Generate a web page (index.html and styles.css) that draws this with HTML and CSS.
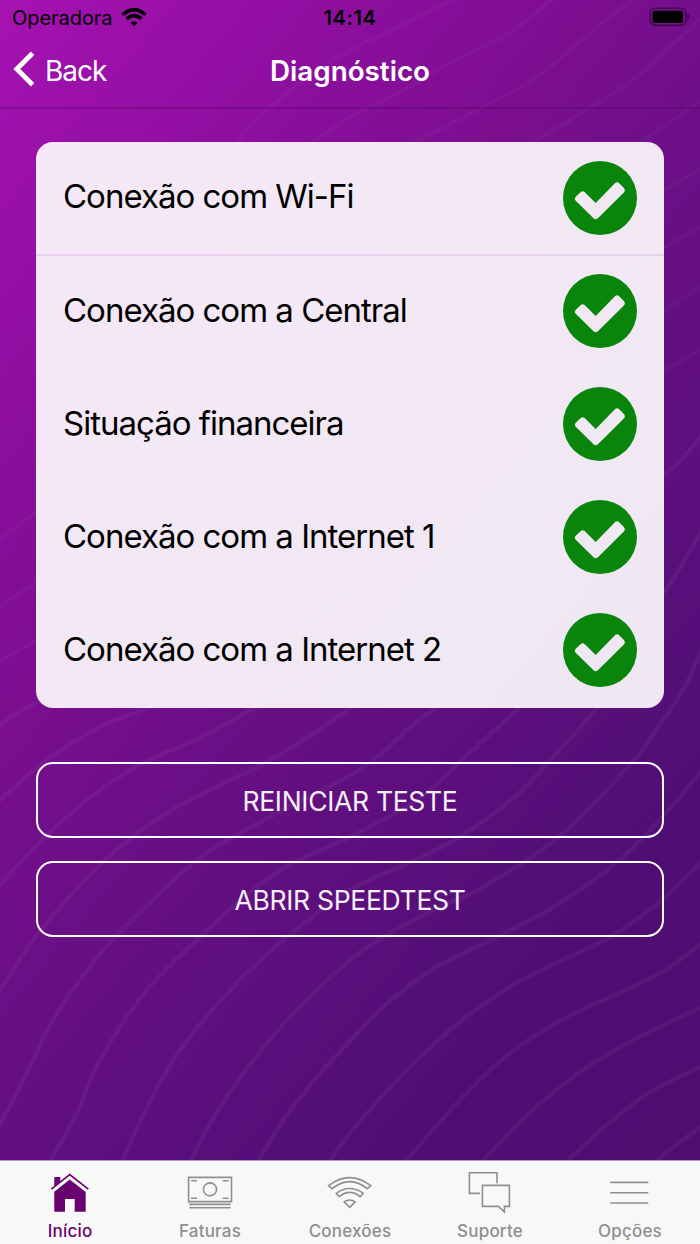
FILE: index.html
```html
<!DOCTYPE html>
<html lang="pt-BR">
<head>
<meta charset="utf-8">
<title>Diagnóstico</title>
<link rel="stylesheet" href="styles.css">
</head>
<body>
<svg class="defs" width="0" height="0" aria-hidden="true">
  <symbol id="check" viewBox="0 0 74 74">
    <path fill-rule="evenodd" d="M37 0a37 37 0 1 0 0 74a37 37 0 1 0 0-74Z M32.700 42L51.900 22.300Q54 20.300 56.200 22.200L60.900 26.900Q62.800 29.300 60.900 31.500L34.900 57.300Q32.700 59.300 30.500 57.300L12.700 39.700Q10.900 37.700 12.700 35.700L17.500 31.200Q19.700 29.300 21.900 31.200Z"/>
  </symbol>
</svg>
<div class="screen">
  <svg class="waves" viewBox="0 0 700 1160" aria-hidden="true"></svg>

  <div class="statusbar">
    <div class="carrier">
      <span class="carrier-name">Operadora</span>
      <svg class="wifi" viewBox="0 0 26 19">
        <path d="M13 18.300L9.500 14.900Q13 11.800 16.500 14.900Z"/>
        <path class="arc" d="M1.500 6.800Q13-3.800 24.500 6.800M5.600 10.900Q13 4.300 20.400 10.900"/>
      </svg>
    </div>
    <div class="clock">14:14</div>
    <svg class="battery" viewBox="0 0 42 20">
      <rect class="shell" x="1.200" y="1.200" width="35.600" height="17.200" rx="4.800"/>
      <rect x="3.500" y="3.700" width="30.500" height="12.300" rx="2.200"/>
      <path class="nub" d="M38.400 6.800Q40.800 7.800 40.800 10Q40.800 12.200 38.400 13.200Z"/>
    </svg>
  </div>

  <header class="navbar">
    <div class="back">
      <svg class="chevron" viewBox="0 0 24 38"><path d="M20.600 3.200L4.800 19L20.600 34.800"/></svg>
      <span class="back-label">Back</span>
    </div>
    <h1 class="title">Diagnóstico</h1>
  </header>

  <main class="content">
    <ul class="card">
      <li class="row first"><span>Conexão com Wi-Fi</span><svg class="check"><use href="#check"/></svg></li>
      <li class="row"><span>Conexão com a Central</span><svg class="check"><use href="#check"/></svg></li>
      <li class="row"><span>Situação financeira</span><svg class="check"><use href="#check"/></svg></li>
      <li class="row"><span>Conexão com a Internet 1</span><svg class="check"><use href="#check"/></svg></li>
      <li class="row"><span>Conexão com a Internet 2</span><svg class="check"><use href="#check"/></svg></li>
    </ul>
    <button class="button">REINICIAR TESTE</button>
    <button class="button">ABRIR SPEEDTEST</button>
  </main>

  <nav class="tabbar">
    <div class="tab active">
      <svg class="icon" viewBox="0 0 48 44">
        <path class="solid" d="M8.300 7H14.300V11.800L8.300 16.600Z M23.700 9.600L39.700 22V41.700H28.700V29H19V41.700H8.300V21.800Z"/>
        <path d="M5.400 19.200L23.700 4.600L42.300 19.200"/>
      </svg>
      <span>Início</span>
    </div>
    <div class="tab">
      <svg class="icon" viewBox="0 0 48 44">
        <path d="M2.600 7.400H45.500V31.600H2.600ZM3.200 34.400H44.700M3.200 37.700H44.700M5 10.800H11M36.700 10.800H42.700M5 28.200H11M36.700 28.200H42.700"/>
        <circle cx="24" cy="19.400" r="6.500"/>
      </svg>
      <span>Faturas</span>
    </div>
    <div class="tab">
      <svg class="icon" viewBox="0 0 48 44">
        <path d="M2.600 15.600Q23.700-.4 44.800 15.600L41.400 18.700Q23.700 4.400 6 18.700ZM10.200 23.300Q23.700 13.800 37.200 23.300L34.200 26.600Q23.700 18.200 13.200 26.600ZM18.200 31.900Q23.700 28 29.200 31.900L23.700 37.400Z"/>
      </svg>
      <span>Conexões</span>
    </div>
    <div class="tab">
      <svg class="icon" viewBox="0 0 48 44">
        <path d="M31 13.300V2.700H3.400V23.400H14M16.400 15.400H43.400V36.400H38.400V42L32.400 36.400H16.400Z"/>
      </svg>
      <span>Suporte</span>
    </div>
    <div class="tab">
      <svg class="icon" viewBox="0 0 48 44">
        <path d="M4.300 12.400H42.300M4.300 22.700H42.300M4.300 33H42.300"/>
      </svg>
      <span>Opções</span>
    </div>
  </nav>
</div>
<script src="waves.js"></script>
</body>
</html>
```

FILE: waves.js
```js
// Smooth decorative lines, each given as a list of x,y points.
const faint = [
  [235,144, 260,117, 300,83, 350,50, 400,26, 455,-2],
  [310,144, 350,117, 400,92, 450,63, 510,33, 555,-4],
  [410,144, 477,110, 537,77, 590,33, 637,-4],
  [530,144, 570,120, 633,80, 670,47, 702,18],
  [635,146, 673,120, 702,99],
  [600,230, 664,190, 702,169],
  [600,290, 664,248, 702,227],
  [600,350, 664,310, 702,286],
  [600,405, 664,370, 702,349],
  [-2,541, 36,512, 100,470],
  [-2,608, 36,583, 110,545],
  [-2,662, 36,641, 140,590],
];
const lines = [
  [-2,726, 40,701, 160,650, 260,590],
  [-2,802, 43,763, 100,727, 145,709, 260,660, 350,590],
  [-2,887, 47,835, 100,790, 147,761, 200,738, 250,710, 350,650, 440,570],
  [-2,994, 37,935, 107,858, 177,807, 267,762, 347,710, 450,630, 560,550, 664,475, 702,435],
  [-2,1128, 27,1073, 50,1025, 80,980, 117,935, 193,863, 233,837, 283,810, 367,765, 433,710, 540,660, 630,617, 664,592, 702,530],
  [50,1162, 77,1113, 100,1060, 147,990, 200,937, 253,890, 293,863, 350,837, 417,800, 460,762, 517,710, 600,640],
  [122,1162, 147,1107, 180,1050, 233,987, 287,937, 350,890, 413,861, 463,835, 517,795, 553,757, 597,708, 640,650],
  [190,1162, 220,1107, 267,1043, 307,1000, 350,960, 383,937, 433,910, 483,887, 557,838, 630,765, 655,732, 683,690, 704,645],
  [258,1162, 283,1120, 317,1077, 350,1041, 390,1001, 437,967, 497,937, 557,905, 617,862, 657,823, 704,768],
  [329,1162, 350,1133, 400,1077, 450,1030, 500,993, 550,966, 610,937, 663,899, 704,859],
  [405,1162, 460,1100, 510,1053, 567,1017, 633,987, 670,967, 704,941],
  [482,1162, 533,1110, 583,1070, 633,1040, 704,1006],
  [566,1162, 610,1122, 650,1092, 704,1065],
  [655,1162, 680,1142, 704,1125],
];

// Catmull-Rom spline through the points, written as cubic Béziers
function spline(c) {
  const p = [];
  for (let i = 0; i < c.length; i += 2) p.push([c[i], c[i + 1]]);
  let d = `M${p[0]}`;
  for (let i = 0; i < p.length - 1; i++) {
    const a = p[i - 1] || p[i], b = p[i], e = p[i + 1], f = p[i + 2] || e;
    d += `C${b[0] + (e[0] - a[0]) / 6} ${b[1] + (e[1] - a[1]) / 6} ${e[0] - (f[0] - b[0]) / 6} ${e[1] - (f[1] - b[1]) / 6} ${e[0]} ${e[1]}`;
  }
  return d;
}

const svg = document.querySelector('.waves');
for (const [set, name] of [[faint, 'faint'], [lines, 'line']]) {
  for (const c of set) {
    const path = document.createElementNS('http://www.w3.org/2000/svg', 'path');
    path.setAttribute('class', name);
    path.setAttribute('d', spline(c));
    svg.appendChild(path);
  }
}
```

FILE: styles.css
```css
* { box-sizing: border-box; }
body { margin: 0; font-family: Inter, "Liberation Sans", sans-serif; }
.defs { position: absolute; }

.screen {
  position: relative;
  display: flex;
  flex-direction: column;
  width: 700px;
  height: 1244px;
  overflow: hidden;
  background: linear-gradient(130deg, #a612b2 0%, #8a0e9c 23%, #7e0e91 33%, #6e0f88 45%, #620f7f 56%, #550f79 71%, #500e74 78%, #4e0d6e 100%);
}

/* decorative lines behind the content */
.waves { position: absolute; left: 0; top: 0; width: 700px; height: 1160px; }
.waves path { fill: none; stroke: #9a70b8; stroke-opacity: .11; stroke-width: 4.500; }
.waves .faint { stroke-opacity: .07; }

.statusbar {
  position: relative;
  display: grid;
  grid-template-columns: 1fr auto 1fr;
  align-items: center;
  height: 36px;
  padding: 0 10px 0 12px;
  color: #000;
}
.carrier { display: flex; align-items: center; gap: 8px; margin-right: 2px; }
.carrier-name { font-size: 20px; letter-spacing: -.05px; }
.wifi { width: 26px; height: 19px; margin-top: -2px; }
.wifi .arc { fill: none; stroke: #000; stroke-width: 3.600; }
.clock { margin-left: -2px; font-size: 20px; font-weight: 600; letter-spacing: .6px; }
.battery { justify-self: end; width: 42px; height: 20px; margin: -2px -1px 0 0; }
.battery .shell { fill: none; stroke: #000; stroke-opacity: .45; stroke-width: 1.600; }
.battery .nub { fill-opacity: .45; }

.navbar {
  position: relative;
  display: grid;
  grid-template-columns: 1fr auto 1fr;
  align-items: center;
  height: 73px;
  padding: 0 12px 1px;
  border-bottom: 2px solid rgba(60, 0, 80, .25);
  color: #fff;
}
.back { display: flex; align-items: center; gap: 9px; }
.chevron { width: 24px; height: 38px; margin-top: -4px; fill: none; stroke: #fff; stroke-width: 4.800; }
.back-label { font-size: 28px; letter-spacing: -1px; }
.title { margin: 0; font-size: 27.800px; font-weight: 600; }

.content { position: relative; flex: 1; padding: 33px 36px 0; }
.card {
  height: 566px;
  margin: 0 0 54px;
  padding: 0;
  list-style: none;
  border-radius: 17px;
  background: rgba(255, 255, 255, .905);
}
.row {
  display: flex;
  align-items: center;
  justify-content: space-between;
  height: 113px;
  padding: 0 27px 3px;
  font-size: 33px;
  letter-spacing: -1px;
  color: #000;
}
.row.first { height: 114px; border-bottom: 2px solid rgba(150, 40, 170, .12); padding-bottom: 1px; }
.row span { margin-top: -3px; }
.check { width: 74px; height: 74px; fill: #08850a; }

.button {
  display: block;
  width: 100%;
  height: 76px;
  margin: 0 0 23px;
  padding: 2px 0 0;
  border: 2px solid #fff;
  border-radius: 17px;
  background: none;
  color: #f6f0f8;
  font: 400 26.500px Inter, "Liberation Sans", sans-serif;
  letter-spacing: -.3px;
}

.tabbar {
  position: relative;
  display: grid;
  grid-template-columns: repeat(5, 1fr);
  height: 84px;
  border-top: 1px solid #b39ac0;
  background: #f8f8f8;
  color: #8f8f8f;
}
.tab { display: flex; flex-direction: column; align-items: center; padding-top: 9px; font-size: 17px; font-weight: 500; letter-spacing: .2px; line-height: 20px; }
.tab.active { color: #67026f; }
.icon { width: 48px; height: 44px; margin-bottom: 7px; fill: none; stroke: currentColor; stroke-width: 1.600; }
.icon .solid { fill: currentColor; stroke: none; }
```
